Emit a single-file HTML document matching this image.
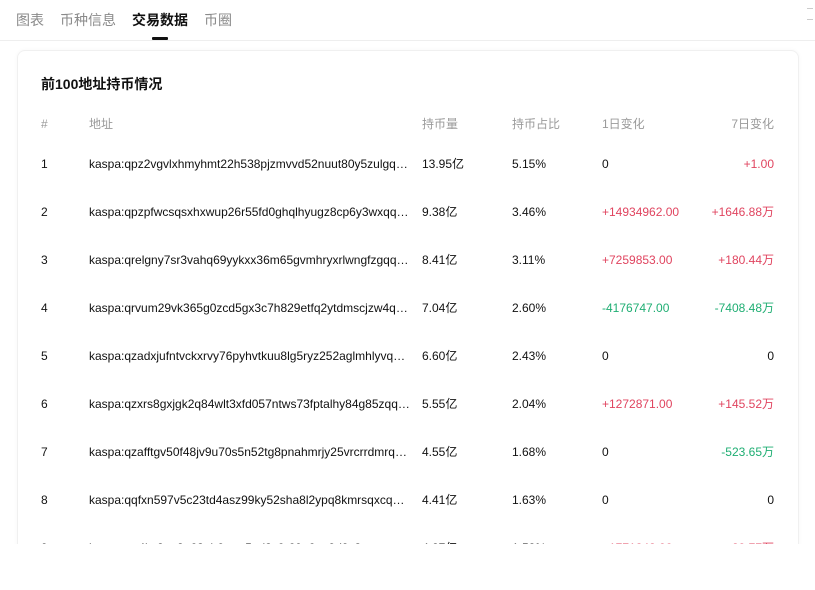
<!DOCTYPE html>
<html><head><meta charset="utf-8"><style>
html,body{margin:0;width:815px;height:590px;overflow:hidden}
body{background:#fff;font-family:"Liberation Sans","Noto Sans CJK SC",sans-serif;position:relative}
.tab{position:absolute;top:11px;font-size:14px;line-height:18px;color:#8a8a8a}
.tab.a{color:#111;font-weight:bold}
.line{position:absolute;left:0;right:0;top:40px;height:1px;background:#eeeeee}
.ul{position:absolute;left:152px;top:37px;width:16px;height:3px;background:#111;border-radius:1px}
.clip{position:absolute;left:0;top:41px;width:815px;height:503px;overflow:hidden}
.card{position:absolute;left:17px;top:9px;width:780px;height:520px;border:1px solid #f0f0f0;border-radius:8px;box-shadow:0 0 4px rgba(0,0,0,0.04)}
.title{position:absolute;left:41px;top:34px;font-size:14px;line-height:18px;font-weight:bold;color:#111}
.c{position:absolute;font-size:12px;line-height:14px;height:14px;color:#111;white-space:nowrap}
.h{color:#9a9a9a}
.addr{width:322px;overflow:hidden;text-overflow:ellipsis}
.r{text-align:right;right:41px}
.red{color:#e0445f}.grn{color:#1fae73}
.sb{position:absolute;right:2px;top:8px;width:6px;height:10px;border-top:1px solid #ccc;border-bottom:1px solid #ccc}
</style></head><body>
<div class="tab" style="left:16px">图表</div>
<div class="tab" style="left:60px">币种信息</div>
<div class="tab a" style="left:132px">交易数据</div>
<div class="tab" style="left:204px">币圈</div>
<div class="ul"></div>
<div class="line"></div>
<div class="sb"></div>
<div class="clip">
<div class="card"></div>
<div class="title">前100地址持币情况</div>
<div id="t"></div>
</div>
<script>
var rows=[
["#","地址","持币量","持币占比","1日变化","7日变化","h","h"],
["1","kaspa:qpz2vgvlxhmyhmt22h538pjzmvvd52nuut80y5zulgqqqq","13.95亿","5.15%","0","+1.00","","red"],
["2","kaspa:qpzpfwcsqsxhxwup26r55fd0ghqlhyugz8cp6y3wxqqqqqqq","9.38亿","3.46%","+14934962.00","+1646.88万","red","red"],
["3","kaspa:qrelgny7sr3vahq69yykxx36m65gvmhryxrlwngfzgqqqqqq","8.41亿","3.11%","+7259853.00","+180.44万","red","red"],
["4","kaspa:qrvum29vk365g0zcd5gx3c7h829etfq2ytdmscjzw4qqqq","7.04亿","2.60%","-4176747.00","-7408.48万","grn","grn"],
["5","kaspa:qzadxjufntvckxrvy76pyhvtkuu8lg5ryz252aglmhlyvqqqq","6.60亿","2.43%","0","0","",""],
["6","kaspa:qzxrs8gxjgk2q84wlt3xfd057ntws73fptalhy84g85zqqqq","5.55亿","2.04%","+1272871.00","+145.52万","red","red"],
["7","kaspa:qzafftgv50f48jv9u70s5n52tg8pnahmrjy25vrcrrdmrqqqq","4.55亿","1.68%","0","-523.65万","","grn"],
["8","kaspa:qqfxn597v5c23td4asz99ky52sha8l2ypq8kmrsqxcqqqq","4.41亿","1.63%","0","0","",""],
["9","kaspa:qrt4kx2ep8g63gh6wxe5ud3c0r60n6ea9d9y3qqqqqqq","4.27亿","1.58%","+1771342.00","+89.77万","red","red"]];
var h="";
rows.forEach(function(r,i){
 var y=i==0?76:116+48*(i-1);
 var hc=i==0?" h":"";
 h+='<div class="c'+hc+'" style="left:41px;top:'+y+'px">'+r[0]+'</div>';
 h+='<div class="c addr'+hc+'" style="left:89px;top:'+y+'px">'+r[1]+'</div>';
 h+='<div class="c'+hc+'" style="left:422px;top:'+y+'px">'+r[2]+'</div>';
 h+='<div class="c'+hc+'" style="left:512px;top:'+y+'px">'+r[3]+'</div>';
 h+='<div class="c '+r[6]+'" style="left:602px;top:'+y+'px">'+r[4]+'</div>';
 h+='<div class="c r '+r[7]+'" style="top:'+y+'px">'+r[5]+'</div>';
});
document.getElementById('t').innerHTML=h;
</script>
</body></html>
